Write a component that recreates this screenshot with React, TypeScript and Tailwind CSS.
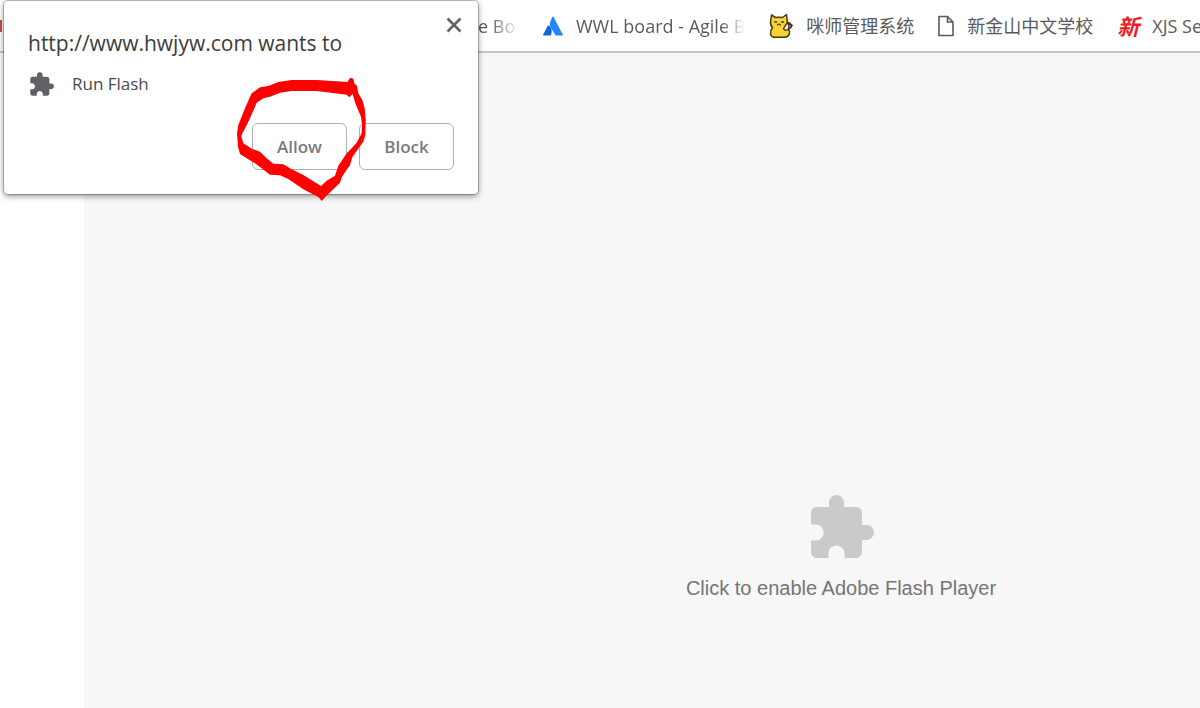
import React from "react";
import { MdExtension } from "react-icons/md";

const FONT = "font-['Open_Sans','Noto_Sans_CJK_SC',sans-serif]";

const AtlassianIcon = () => (
  <svg viewBox="0 0 20 20" className="size-5 shrink-0" aria-hidden="true">
    <path d="M5.500 9.500C9 11.500 9.500 15.500 7.800 19.500H.8C.2 19.500 0 19 .2 18.500L4.600 10Q5 9.200 5.500 9.500Z" fill="#1565d8" />
    <path d="M9.500 .8Q10 0 10.500 .8L19.700 18.500C20 19 19.700 19.500 19.100 19.500H13.200C12.600 19.500 12.300 19.200 12 18.600L7.600 11.500C5.900 8 7.500 4.500 9.500 .8Z" fill="#2684ff" />
  </svg>
);

const CatIcon = () => (
  <svg viewBox="0 0 24 26" className="h-[26px] w-6 shrink-0" aria-hidden="true">
    <path
      d="M2.500 2L6.500 4.500Q10 3.800 13.500 4.500L17.500 1.500L18.300 8Q18.500 11 16 13L14.500 16Q17 18.500 19.800 15.500Q20.500 13 18.800 9.500Q22.300 11 22.300 13Q22.300 15 19.600 16Q21.500 20 19.500 22.500Q18.500 24.200 15 24.200H5Q1.800 24 1.600 20.500Q1.500 17 3.500 14.500Q1 12 1.600 8Z"
      fill="#f7d435"
      stroke="#4a3518"
      strokeWidth="1.500"
      strokeLinejoin="round"
    />
    <path d="M5.800 9h1.800M12.600 9h1.800M8.500 12l1.500-1 1.500 1" fill="none" stroke="#4a3518" strokeWidth="1.300" strokeLinecap="round" />
    <path d="M19.500 9.800L23 12.500" stroke="#4a3518" strokeWidth="1.800" strokeLinecap="round" />
  </svg>
);

const PageIcon = () => (
  <svg viewBox="0 0 16 22" className="h-[22px] w-4 shrink-0" aria-hidden="true">
    <path d="M1 1.500H9.500L15 7V20.500H1Z" fill="#fff" stroke="#5a5a5a" strokeWidth="1.600" strokeLinejoin="round" />
    <path d="M9.500 1.500V7H15" fill="none" stroke="#5a5a5a" strokeWidth="1.600" />
  </svg>
);

const SchoolIcon = () => (
  <span className="w-[22px] shrink-0 text-[22px] leading-6 font-bold italic text-[#ee1c25]">新</span>
);

const bookmarks = [
  { label: "WWL board - Agile B", icon: <AtlassianIcon />, faded: true },
  { label: "咪师管理系统", icon: <CatIcon />, faded: false },
  { label: "新金山中文学校", icon: <PageIcon />, faded: false },
  { label: "XJS Se", icon: <SchoolIcon />, faded: false },
];

const BookmarksBar = () => (
  <nav className="flex h-[53px] shrink-0 items-center gap-6 overflow-hidden border-b-2 border-[#c6c6c6] bg-white pl-[478px] text-lg text-[#5a5a5a]">
    <a
      href="#board"
      className="w-[41px] shrink-0 whitespace-nowrap [mask-image:linear-gradient(to_right,black_30%,transparent)]"
    >
      e Bo
    </a>
    {bookmarks.map((b) => (
      <a key={b.label} href="#bookmark" className="flex shrink-0 items-center gap-[13px] whitespace-nowrap">
        {b.icon}
        {b.faded ? (
          <span className="min-w-[166px] [mask-image:linear-gradient(to_right,black_86%,transparent)]">
            {b.label}
          </span>
        ) : (
          <span>{b.label}</span>
        )}
      </a>
    ))}
  </nav>
);

// Hand-drawn marker loop around the Allow button
const MarkerLoop = () => (
  <svg
    viewBox="45 225 396 384"
    className="pointer-events-none absolute top-[74px] left-[231px] h-32 w-[132px]"
    aria-hidden="true"
  >
    <path
      fill="#fe0000"
      fillRule="evenodd"
      d="M55 375L75 325L95 280L120 262L145 258L175 246L215 240L290 240L383 246L388 236L394 233L401 238L403 250L411 258L415 280L427 300L434 325L437 360L436 405L430 425L412 450L397 472L390 495L366 530L360 548L335 572L315 592L305 603L296 592L250 568L205 537L180 526L150 524L125 505L105 490L85 478L60 462L54 440L51 400Z
      M64 410L70 430L95 446L120 455L140 475L160 491L190 493L215 508L250 525L303 558L320 542L345 527L355 497L380 460L395 445L410 428L425 400L426 375L423 350L406 310L398 282L388 292L380 284L290 273L215 273L180 278L150 290L130 295L110 308L103 325L85 365L77 382L66 402Z"
    />
  </svg>
);

const PermissionPrompt = () => (
  <div
    role="dialog"
    aria-labelledby="prompt-title"
    className="absolute top-px left-1 w-[474px] rounded-[4px] bg-white px-6 pt-7 pb-6 shadow-[0_0_0_1px_rgba(0,0,0,0.22),0_2px_6px_rgba(0,0,0,0.45)]"
  >
    <h1 id="prompt-title" className="text-[21px] leading-7 text-[#3c3c3c]">
      http://www.hwjyw.com wants to
    </h1>
    <button type="button" aria-label="Close" className="absolute top-4 right-4 text-[#5f6368]">
      <svg viewBox="0 0 16 16" className="size-4" aria-hidden="true">
        <path d="M1.500 1.500L14.500 14.500M14.500 1.500L1.500 14.500" stroke="currentColor" strokeWidth="2.600" />
      </svg>
    </button>
    <div className="mt-3 flex items-center gap-[17px] text-[17px] leading-[30px] text-[#4a4a4a]">
      <MdExtension className="size-[27px] text-[#5f6368]" />
      <span>Run Flash</span>
    </div>
    <div className="mt-6 flex justify-end gap-3 text-[17px] font-semibold text-[#7a7a7a]">
      <button type="button" className="h-[47px] w-[95px] rounded-md border border-[#b0b0b0]">
        Allow
      </button>
      <button type="button" className="h-[47px] w-[95px] rounded-md border border-[#b0b0b0]">
        Block
      </button>
    </div>
    <MarkerLoop />
  </div>
);

export default function App() {
  return (
    <div className={`relative flex h-screen flex-col overflow-hidden bg-white ${FONT}`}>
      <BookmarksBar />
      <span className="absolute top-5 left-0 h-3 w-[2px] bg-[#c0504d]" />
      <main className="ml-[84px] flex flex-1 items-end justify-center bg-[#f7f7f7] pb-[108px] pl-[398px]">
        <button
          type="button"
          className="flex flex-col items-center gap-3 font-['Liberation_Sans',sans-serif] text-xl leading-6 text-[#757575]"
        >
          <MdExtension className="size-[72px] text-[#cacaca]" />
          Click to enable Adobe Flash Player
        </button>
      </main>
      <PermissionPrompt />
    </div>
  );
}
